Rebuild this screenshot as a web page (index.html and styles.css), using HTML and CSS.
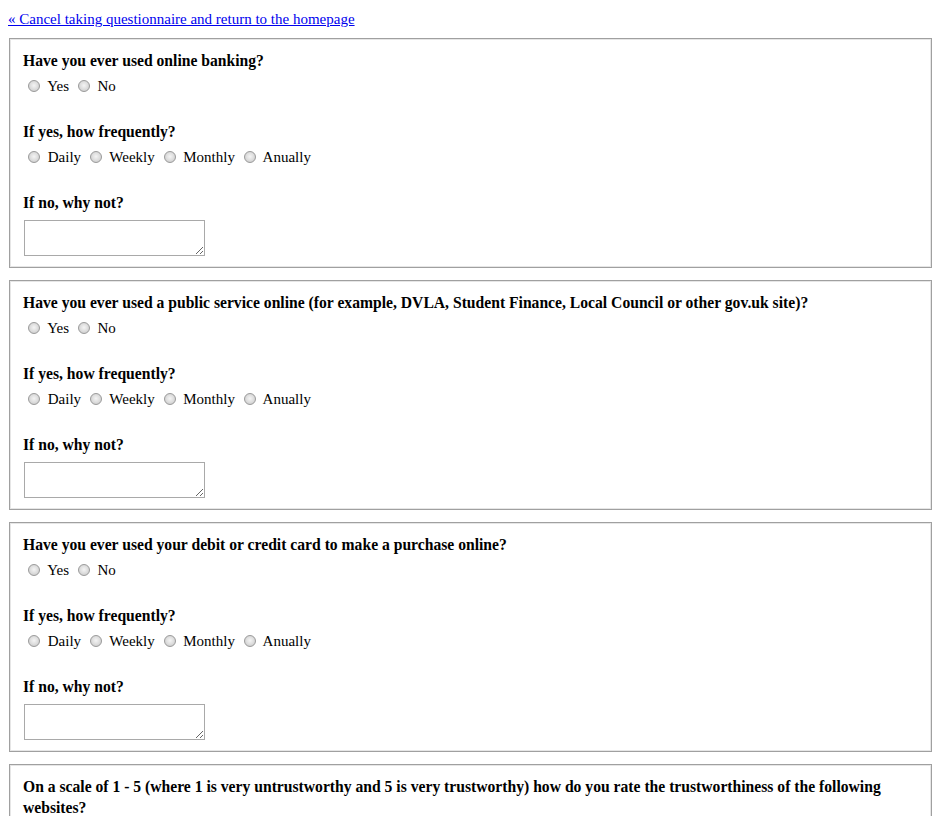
FILE: index.html
```html
<!DOCTYPE html>
<html>
<head>
<meta charset="utf-8">
<title>Questionnaire</title>
<link rel="stylesheet" href="styles.css">
</head>
<body>
<div class="top"><a href="#" class="cancel">&laquo; Cancel taking questionnaire and return to the homepage</a></div>
<form>
  <fieldset class="q">
    <div class="qlabel">Have you ever used online banking?</div>
    <div class="opts"><input type="radio" name="a1"> Yes <input type="radio" name="a1"> No</div>
    <div class="qlabel sub">If yes, how frequently?</div>
    <div class="opts"><input type="radio" name="f1"> Daily <input type="radio" name="f1"> Weekly <input type="radio" name="f1"> Monthly <input type="radio" name="f1"> Anually</div>
    <div class="qlabel sub why-label">If no, why not?</div>
    <textarea class="why"></textarea>
  </fieldset>
  <fieldset class="q">
    <div class="qlabel">Have you ever used a public service online (for example, DVLA, Student Finance, Local Council or other gov.uk site)?</div>
    <div class="opts"><input type="radio" name="a2"> Yes <input type="radio" name="a2"> No</div>
    <div class="qlabel sub">If yes, how frequently?</div>
    <div class="opts"><input type="radio" name="f2"> Daily <input type="radio" name="f2"> Weekly <input type="radio" name="f2"> Monthly <input type="radio" name="f2"> Anually</div>
    <div class="qlabel sub why-label">If no, why not?</div>
    <textarea class="why"></textarea>
  </fieldset>
  <fieldset class="q">
    <div class="qlabel">Have you ever used your debit or credit card to make a purchase online?</div>
    <div class="opts"><input type="radio" name="a3"> Yes <input type="radio" name="a3"> No</div>
    <div class="qlabel sub">If yes, how frequently?</div>
    <div class="opts"><input type="radio" name="f3"> Daily <input type="radio" name="f3"> Weekly <input type="radio" name="f3"> Monthly <input type="radio" name="f3"> Anually</div>
    <div class="qlabel sub why-label">If no, why not?</div>
    <textarea class="why"></textarea>
  </fieldset>
  <fieldset class="q">
    <div class="qlabel wide">On a scale of 1 - 5 (where 1 is very untrustworthy and 5 is very trustworthy) how do you rate the trustworthiness of the following websites?</div>
  </fieldset>
</form>
</body>
</html>
```
FILE: styles.css
```css
body {
  margin: 8px;
  font-family: "Liberation Serif", "Times New Roman", serif;
  font-size: 15px;
  line-height: 17px;
  color: #000;
  background: #fff;
}
.top {
  margin-top: 3px;
  margin-bottom: 10px;
}
.cancel {
  color: #0000ee;
  text-decoration: underline;
}
form {
  margin: 0;
}
.q {
  margin: 0 1px 12px;
  padding: 13px 12px 11px 13px;
  border: 1px solid #a0a0a0;
  box-shadow: inset 0 0 0 1px #e6e6e6;
}
.qlabel {
  font-weight: bold;
  font-size: 15.65px;
  margin-bottom: 8px;
}
.qlabel.sub {
  margin-top: 28px;
}
.qlabel.why-label {
  margin-bottom: 9px;
}
.qlabel.wide {
  line-height: 21px;
  margin-top: -2px;
}
.opts {
  line-height: 18px;
  white-space: nowrap;
}
input[type="radio"] {
  -webkit-appearance: none;
  appearance: none;
  width: 12px;
  height: 12px;
  margin: 3px 4px 0 5px;
  border: 1px solid #9a9a9a;
  border-radius: 50%;
  background: radial-gradient(circle at 50% 45%, #f4f4f4 0%, #e0e0e0 45%, #c4c4c4 100%);
  vertical-align: -1px;
  box-sizing: border-box;
}
.why {
  display: block;
  width: 181px;
  height: 36px;
  box-sizing: border-box;
  margin: 0 0 0 1px;
  border: 1px solid #a9a9a9;
  padding: 2px;
  font-family: "Liberation Mono", monospace;
  font-size: 13px;
  resize: both;
}
```
